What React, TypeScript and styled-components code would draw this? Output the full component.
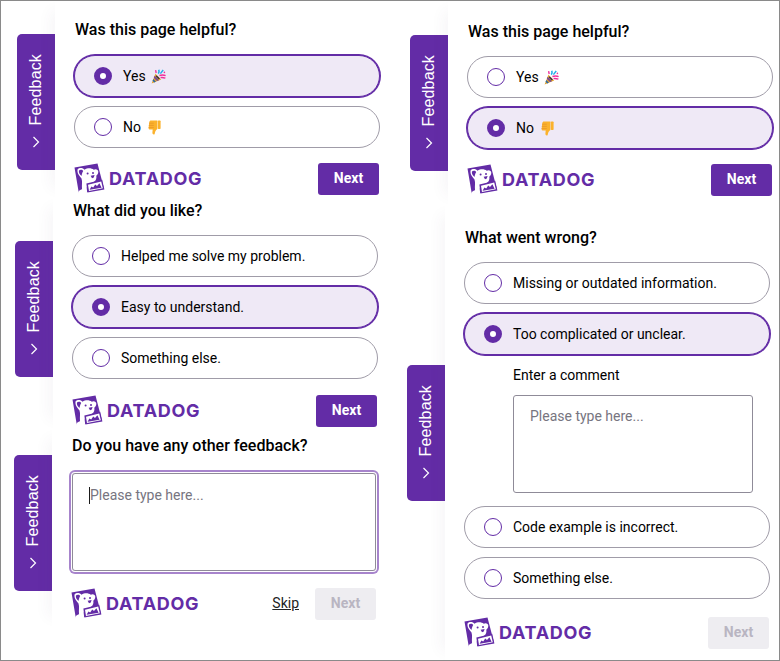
import React from "react";
import styled, { createGlobalStyle } from "styled-components";

const Global = createGlobalStyle`
  html, body { margin: 0; padding: 0; background: #fff; }
  body { font-family: Roboto, "Liberation Sans", sans-serif; color: #000; }
  * { box-sizing: border-box; }
`;

const Frame = styled.div`
  width: 780px;
  height: 661px;
  border: 1px solid #8a8a8a;
  display: flex;
  overflow: hidden;
  background: #fff;
`;

const Column = styled.div<{ $width: number }>`
  width: ${(p) => p.$width}px;
  flex: none;
  display: flex;
  flex-direction: column;
`;

const Widget = styled.section<{ $inset: number }>`
  display: flex;
  align-items: flex-start;
  margin-left: ${(p) => p.$inset}px;
`;

const Tab = styled.div<{ $top: number }>`
  width: 38px;
  height: 136px;
  margin-top: ${(p) => p.$top}px;
  flex: none;
  background: #632ca6;
  border-radius: 5px 0 0 5px;
  color: #fff;
  display: flex;
  flex-direction: column;
  align-items: center;
  padding-top: 20px;
  gap: 11px;
`;

const TabLabel = styled.span`
  writing-mode: vertical-rl;
  transform: rotate(180deg);
  font-family: "Liberation Sans", Arial, sans-serif;
  font-size: 16px;
  line-height: 18px;
  letter-spacing: 0.15px;
`;

const Panel = styled.div<{ $top: number; $bottom: number }>`
  width: 326px;
  flex: none;
  padding: ${(p) => p.$top}px 0 ${(p) => p.$bottom}px 19px;
  background: #fff;
  box-shadow: -14px 0 14px -10px rgba(70, 60, 90, 0.05);
`;

const Title = styled.h2<{ $gap: number }>`
  margin: 0 0 ${(p) => p.$gap}px 1px;
  font-size: 16px;
  font-weight: 500;
  line-height: 20px;
`;

const Options = styled.div`
  display: flex;
  flex-direction: column;
  gap: 9px;
  width: 306px;
`;

const Option = styled.div<{ $on?: boolean }>`
  height: 42px;
  display: flex;
  align-items: center;
  gap: 11px;
  padding-left: 19px;
  border-radius: 21px;
  font-size: 14px;
  line-height: 20px;
  border: 1px solid ${(p) => (p.$on ? "#632ca6" : "#a09ca8")};
  background: ${(p) => (p.$on ? "#efe9f6" : "#fff")};
  box-shadow: ${(p) => (p.$on ? "0 0 0 1px #632ca6" : "none")};
`;

const Radio = styled.span<{ $on?: boolean }>`
  width: 18px;
  height: 18px;
  flex: none;
  border-radius: 50%;
  background: ${(p) => (p.$on ? "#fff" : "transparent")};
  border: ${(p) => (p.$on ? "6px" : "1.3px")} solid #632ca6;
`;

const LabelText = styled.span`
  display: inline-flex;
  align-items: center;
  gap: 5px;
`;

const Comment = styled.div`
  padding: 9px 0 13px 49px;
  display: flex;
  flex-direction: column;
  gap: 9px;
  font-size: 14px;
  line-height: 22px;
`;

const Field = styled.div<{ $focus?: boolean; $height: number }>`
  height: ${(p) => p.$height}px;
  width: ${(p) => (p.$focus ? "304px" : "240px")};
  margin-left: ${(p) => (p.$focus ? "1px" : "0")};
  border: 1px solid #8f8b98;
  border-radius: 3px;
  padding: ${(p) => (p.$focus ? "11px 16px" : "10px 16px")};
  font-size: 14px;
  line-height: 20px;
  color: #77757f;
  display: flex;
  align-items: flex-start;
  box-shadow: ${(p) => (p.$focus ? "0 0 0 1px #fff, 0 0 0 3px #a784cc" : "none")};
`;

const Caret = styled.span`
  width: 1px;
  height: 17px;
  background: #1a1a1a;
  margin: 2px 0 0 0;
`;

const Footer = styled.div<{ $gap: number }>`
  display: flex;
  align-items: center;
  margin-top: ${(p) => p.$gap}px;
  width: 305px;
  height: 32px;
`;

const Logo = styled.div`
  display: flex;
  align-items: center;
  gap: 4px;
  margin-right: auto;
  color: #632ca6;
`;

const LogoWord = styled.span`
  font-family: Inter, "Open Sans", sans-serif;
  font-weight: 700;
  font-size: 18px;
  line-height: 24px;
  letter-spacing: 0.72px;
`;

const Skip = styled.a`
  color: #222;
  font-size: 14px;
  text-decoration: underline;
  margin-right: 16px;
  padding-bottom: 2px;
`;

const NextButton = styled.button<{ $off?: boolean }>`
  width: 61px;
  height: 32px;
  border: 0;
  border-radius: 3px;
  padding: 0 0 2px;
  font-family: inherit;
  font-size: 14px;
  font-weight: 700;
  background: ${(p) => (p.$off ? "#eeedf1" : "#632ca6")};
  color: ${(p) => (p.$off ? "#b9b5c2" : "#fff")};
`;

const Chevron = () => (
  <svg width="8" height="12" viewBox="0 0 8 12" fill="none" stroke="#fff" strokeWidth="1.2">
    <path d="M1.5 1 L6.5 6 L1.5 11" />
  </svg>
);

const Dog = () => (
  <svg width="31" height="33" viewBox="0 0 31 33">
    <path fill="#632ca6" d="M0.5 4.5 L23.5 0.5 L30 25.5 L13 29 L5 31 Z" />
    <path fill="#fff" d="M3.5 6.5 C5.5 4.3 9 4.8 10.5 6.8 C13.5 4.7 17.5 5 19.8 6.8 C21.8 5.6 24.3 6.6 24.3 8.8 C24.3 11 23 12.3 22.3 12.6 C22.8 15.5 22 17.6 20 18.8 L14 21.5 C12.4 23.2 12.8 25.5 13 27.6 L13.2 29.4 C11 30 9.6 32.8 6.6 32.6 C4.4 32.4 3.4 30 4.6 28.4 C5.6 27 7 26.6 8 26.2 C7.6 21.5 8.6 19 7.5 15.5 C5.5 13 3 10.5 3.5 6.5 Z" />
    <path fill="#632ca6" d="M5 7.5 C6.2 6.2 8.4 6.4 9.2 8 C8.2 9.8 7.6 11.6 7.6 13 C5.8 11.5 4.4 9.4 5 7.5 Z" />
    <circle cx="13.6" cy="10.6" r="1" fill="#632ca6" />
    <circle cx="19" cy="10" r="1" fill="#632ca6" />
    <path fill="#632ca6" d="M16.6 12.8 L20.6 12 L19.8 14.6 L18 15.2 Z" />
    <path fill="#632ca6" d="M12.4 20.6 L28.2 16.8 L30.4 26.4 L13.4 29.6 Z" />
    <path fill="#fff" d="M14 21.8 L27.2 18.6 L28.8 25.3 L15 28 Z" />
    <path fill="#632ca6" d="M15.6 26.8 L17.4 23.4 L19.2 24.6 L21.2 21.6 L23 23 L25.4 20.2 L27.6 24.8 Z" />
  </svg>
);

const Party = () => (
  <svg width="15" height="15" viewBox="0 0 15 15">
    <path fill="#e3a32e" d="M4.4 4.8 L10.2 10.4 L0.6 14.4 Z" />
    <path fill="#7a4a96" d="M3.6 6.8 L8 11.2 L6 12 L2.8 8.8 Z" />
    <path fill="#2c6aa0" d="M2.3 10 L4.9 12.8 L3.2 13.5 L1.6 11.8 Z" />
    <path fill="#3a3340" d="M5.6 6.2 L9 9.6 L7.6 10.2 L4.8 7.4 Z" />
    <path fill="none" stroke="#f0309c" strokeWidth="1.5" d="M8.4 6.4 C10 6 12.4 5.6 14.6 6.6" />
    <path fill="none" stroke="#23aeea" strokeWidth="1.6" d="M7.2 4.6 C8.4 3.4 8.2 2 7.8 0.8" />
    <path fill="none" stroke="#f0309c" strokeWidth="1.4" d="M9.6 8.6 C11 8.2 12.8 8.6 14.4 9.2" />
    <path fill="none" stroke="#23aeea" strokeWidth="1.5" d="M9.4 4.6 L12.2 1" />
    <path fill="none" stroke="#f0309c" strokeWidth="1.4" d="M5.2 4 L4.6 1.2" />
    <circle cx="13.4" cy="3.4" r="0.8" fill="#f0309c" />
  </svg>
);

const ThumbDown = () => (
  <svg width="15" height="15" viewBox="-2 0 15 15">
    <g transform="translate(13 0) scale(-1 1)">
      <path fill="#fbb22c" d="M3.6 0.6 L10 0.6 C10.9 0.6 11.6 1.3 11.7 2.2 L12.4 8 C12.4 8.9 11.7 9.6 10.8 9.6 L8.3 9.6 L8.6 12.6 C8.7 14.1 7.6 14.8 6.8 14.4 C6.2 14.1 6.2 13.2 6 12.4 C5.6 10.8 4.4 9.7 3.6 9 Z" />
      <rect x="0.4" y="0.6" width="2.8" height="8.4" rx="0.7" fill="#fbb22c" />
      <path fill="none" stroke="#e8952a" strokeWidth="0.8" d="M7.2 3.2 L12 3.2 M7.2 5.4 L12.2 5.4 M7.2 7.6 L12.4 7.6" />
    </g>
  </svg>
);

const Brand = () => (
  <Logo>
    <Dog />
    <LogoWord>DATADOG</LogoWord>
  </Logo>
);

const Choice = ({ on, children }: { on?: boolean; children: React.ReactNode }) => (
  <Option $on={on}>
    <Radio $on={on} />
    <LabelText>{children}</LabelText>
  </Option>
);

const FeedbackTab = ({ top }: { top: number }) => (
  <Tab $top={top}>
    <TabLabel>Feedback</TabLabel>
    <Chevron />
  </Tab>
);

export default function App() {
  return (
    <Frame>
      <Global />
      <Column $width={392}>
        <Widget $inset={16}>
          <FeedbackTab top={33} />
          <Panel $top={19} $bottom={3}>
            <Title $gap={15}>Was this page helpful?</Title>
            <Options>
              <Choice on>Yes <Party /></Choice>
              <Choice>No <ThumbDown /></Choice>
            </Options>
            <Footer $gap={15}>
              <Brand />
              <NextButton>Next</NextButton>
            </Footer>
          </Panel>
        </Widget>
        <Widget $inset={14}>
          <FeedbackTab top={43} />
          <Panel $top={3} $bottom={2}>
            <Title $gap={14}>What did you like?</Title>
            <Options>
              <Choice>Helped me solve my problem.</Choice>
              <Choice on>Easy to understand.</Choice>
              <Choice>Something else.</Choice>
            </Options>
            <Footer $gap={16}>
              <Brand />
              <NextButton>Next</NextButton>
            </Footer>
          </Panel>
        </Widget>
        <Widget $inset={13}>
          <FeedbackTab top={26} />
          <Panel $top={7} $bottom={7}>
            <Title $gap={17}>Do you have any other feedback?</Title>
            <Field $focus $height={98}>
              <Caret />
              Please type here...
            </Field>
            <Footer $gap={17}>
              <Brand />
              <Skip>Skip</Skip>
              <NextButton $off>Next</NextButton>
            </Footer>
          </Panel>
        </Widget>
      </Column>
      <Column $width={386}>
        <Widget $inset={17}>
          <FeedbackTab top={34} />
          <Panel $top={21} $bottom={9}>
            <Title $gap={14}>Was this page helpful?</Title>
            <Options>
              <Choice>Yes <Party /></Choice>
              <Choice on>No <ThumbDown /></Choice>
            </Options>
            <Footer $gap={15}>
              <Brand />
              <NextButton>Next</NextButton>
            </Footer>
          </Panel>
        </Widget>
        <Widget $inset={14}>
          <FeedbackTab top={160} />
          <Panel $top={23} $bottom={12}>
            <Title $gap={14}>What went wrong?</Title>
            <Options>
              <Choice>Missing or outdated information.</Choice>
              <Choice on>Too complicated or unclear.</Choice>
            </Options>
            <Comment>
              Enter a comment
              <Field $height={98}>Please type here...</Field>
            </Comment>
            <Options>
              <Choice>Code example is incorrect.</Choice>
              <Choice>Something else.</Choice>
            </Options>
            <Footer $gap={18}>
              <Brand />
              <NextButton $off>Next</NextButton>
            </Footer>
          </Panel>
        </Widget>
      </Column>
    </Frame>
  );
}
